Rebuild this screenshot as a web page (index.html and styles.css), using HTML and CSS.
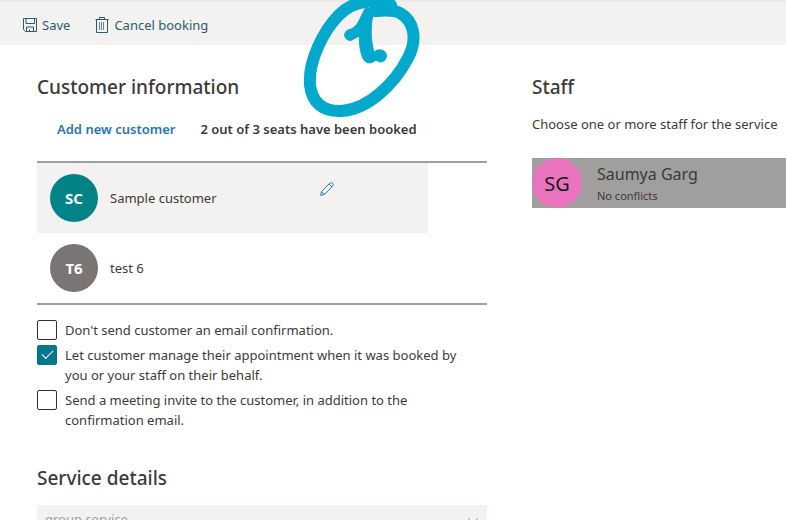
FILE: index.html
```html
<!DOCTYPE html>
<html lang="en">
<head>
    <meta charset="UTF-8">
    <meta name="viewport" content="width=device-width, initial-scale=1.0">
    <title>Bookings</title>
    <link rel="stylesheet" href="styles.css">
</head>
<body>
<header class="toolbar">
    <button type="button" class="command">
        <svg class="save-icon" width="14" height="14" viewBox="0 0 14 14">
            <path d="M.5.5h13v13h-11l-2-2zM3 .5v5h8.500v-5M3.500 13.500V9h7v4.500M6.500 13.500v-2"/>
        </svg>
        Save
    </button>
    <button type="button" class="command">
        <svg class="trash-icon" width="14" height="16" viewBox="0 0 14 16">
            <path d="M.5 2.500h13M4.500 2.500v-2h5v2M1.500 2.500v13h11v-13"/>
            <path class="trash-lines" d="M4.500 5v8M6.500 5v8M8.500 5v8"/>
        </svg>
        Cancel booking
    </button>
</header>

<main class="content">
    <section class="details">
        <h2>Customer information</h2>
        <div class="customer-actions">
            <button type="button" class="add-customer">Add new customer</button>
            <span class="seats">2 out of 3 seats have been booked</span>
        </div>
        <ul class="customer-list">
            <li class="customer selected">
                <span class="avatar teal">SC</span>
                <span class="customer-name">Sample customer</span>
                <button type="button" class="edit-button" aria-label="Edit customer">
                    <svg width="14" height="14" viewBox="0 0 14 14">
                        <path d="M.6 13.400l1-4L10 1q1.500-1 2.600.2 1.300 1.200.3 2.700L4.500 12.400zM9 2l3 3M1.600 9.400l3 3"/>
                    </svg>
                </button>
            </li>
            <li class="customer">
                <span class="avatar gray">T6</span>
                <span class="customer-name">test 6</span>
            </li>
        </ul>
        <div class="options">
            <div class="option">
                <input type="checkbox" id="noEmail">
                <label for="noEmail">Don't send customer an email confirmation.</label>
            </div>
            <div class="option">
                <input type="checkbox" id="manage" checked>
                <label for="manage">Let customer manage their appointment when it was booked by you or your staff on their behalf.</label>
            </div>
            <div class="option">
                <input type="checkbox" id="invite">
                <label for="invite">Send a meeting invite to the customer, in addition to the confirmation email.</label>
            </div>
        </div>
        <h2>Service details</h2>
        <div class="service">
            <select class="service-select" aria-label="Service" disabled>
                <option>group service</option>
            </select>
            <svg class="chevron" width="12" height="8" viewBox="0 0 12 8">
                <path d="M1 1l5 5 5-5"/>
            </svg>
        </div>
    </section>

    <section class="staff">
        <h2>Staff</h2>
        <p class="staff-hint">Choose one or more staff for the service</p>
        <div class="staff-card">
            <span class="staff-avatar">SG</span>
            <div>
                <div class="staff-name">Saumya Garg</div>
                <div class="staff-status">No conflicts</div>
            </div>
        </div>
    </section>
</main>

<!-- hand-drawn step marker -->
<svg class="marker" width="150" height="125" viewBox="0 0 150 125">
    <path class="marker-ring" d="M101 5C86-1 65-1 49 15C33 31 18 62 20 85C22 103 33 112 52 111C79 109 105 83 118 58C128 39 124 21 110 13C102 9 94 11 84 11"/>
    <path class="marker-fill" d="M77 7L83 15C80 28 81 42 84 52Q87 49 91 50A6 6 0 1 1 86 60Q79 66 74 60C69 52 70 42 69 36L62 40A5 5 0 1 1 58 30C68 28 69 19 76 7Z"/>
</svg>
</body>
</html>
```
FILE: styles.css
```css
body {
    font-family: "Segoe UI", "Noto Sans", "Open Sans", sans-serif;
    font-size: 13px;
    line-height: 20px;
    color: #3b3a39;
    margin: 0;
    background-color: #fff;
    height: 100vh;
    overflow: hidden;
}

button {
    font: inherit;
    background: none;
    border: none;
    padding: 0;
    cursor: pointer;
}

svg {
    fill: none;
    stroke: currentColor;
    stroke-width: 1;
}

h2 {
    font-size: 19px;
    font-weight: 500;
    line-height: 28px;
    margin: 0;
}

.toolbar {
    display: flex;
    gap: 25px;
    padding: 13px 23px 10px;
    background-color: #f3f2f1;
    border-top: 2px solid #ebeae9;
}

.command {
    display: flex;
    align-items: center;
    gap: 5px;
    color: #2b5c6b;
}

.trash-lines {
    stroke: #5f8894;
}

.content {
    display: grid;
    grid-template-columns: minmax(0, 450px) minmax(0, 1fr);
    column-gap: 45px;
    padding: 28px 0 0 37px;
}

/* customer list */
.customer-actions {
    display: flex;
    gap: 25px;
    padding: 18px 20px 22px;
}

.add-customer {
    color: #2b74b3;
    font-weight: 600;
}

.seats {
    font-weight: 600;
}

.customer-list {
    list-style-type: none;
    margin: 0;
    padding: 0;
    border-top: 2px solid #a19f9d;
    border-bottom: 2px solid #a19f9d;
}

.customer {
    display: flex;
    align-items: center;
    gap: 12px;
    height: 70px;
    width: 378px;
    padding-left: 13px;
}

.selected {
    background-color: #f3f2f1;
}

.avatar {
    width: 48px;
    height: 48px;
    border-radius: 50%;
    color: #fff;
    font-size: 15px;
    font-weight: 700;
    line-height: 48px;
    text-align: center;
}

.teal {
    background-color: #038387;
}

.gray {
    background-color: #7a7574;
}

.customer-name {
    width: 198px;
}

.edit-button {
    color: #2b7ab8;
    height: 34px;
    align-self: flex-start;
    padding-top: 18px;
}

.edit-button svg {
    display: block;
}

/* email options */
.options {
    display: flex;
    flex-direction: column;
    gap: 5px;
    padding: 15px 0 34px;
}

.option {
    display: flex;
    align-items: flex-start;
    gap: 8px;
}

.option label {
    max-width: 400px;
}

.option input {
    appearance: none;
    flex: none;
    box-sizing: border-box;
    width: 20px;
    height: 20px;
    margin: 0;
    border: 1px solid #323130;
    border-radius: 2px;
    display: grid;
    place-items: center;
}

.option input:checked {
    background-color: #03788a;
    border-color: #03788a;
}

.option input:checked::before {
    content: "";
    width: 10px;
    height: 5px;
    margin-bottom: 4px;
    border-left: 1px solid #fff;
    border-bottom: 1px solid #fff;
    transform: rotate(-45deg);
}

.service {
    position: relative;
    margin-top: 13px;
}

.service-select {
    appearance: none;
    width: 100%;
    height: 28px;
    padding: 0 8px;
    border: none;
    background-color: #f3f2f1;
    color: #a19f9d;
    font: inherit;
    opacity: 1;
}

.chevron {
    position: absolute;
    right: 8px;
    top: 12px;
    color: #a19f9d;
}

/* staff */
.staff-hint {
    margin: 13px 0 24px;
    white-space: nowrap;
}

.staff-card {
    display: flex;
    gap: 15px;
    height: 50px;
    background-color: #a19f9d;
}

.staff-avatar {
    width: 50px;
    height: 50px;
    border-radius: 50%;
    background-color: #e874be;
    color: #1b1a19;
    font-size: 20px;
    line-height: 52px;
    text-align: center;
}

.staff-name {
    font-size: 16px;
    line-height: 24px;
    padding-top: 4px;
}

.staff-status {
    font-size: 11px;
}

/* marker drawn over the page */
.marker {
    position: absolute;
    left: 290px;
    top: 0;
    color: #03a9cd;
    stroke-linecap: round;
    stroke-linejoin: round;
    pointer-events: none;
}

.marker-ring {
    stroke-width: 12;
}

.marker-fill {
    fill: currentColor;
}
```
